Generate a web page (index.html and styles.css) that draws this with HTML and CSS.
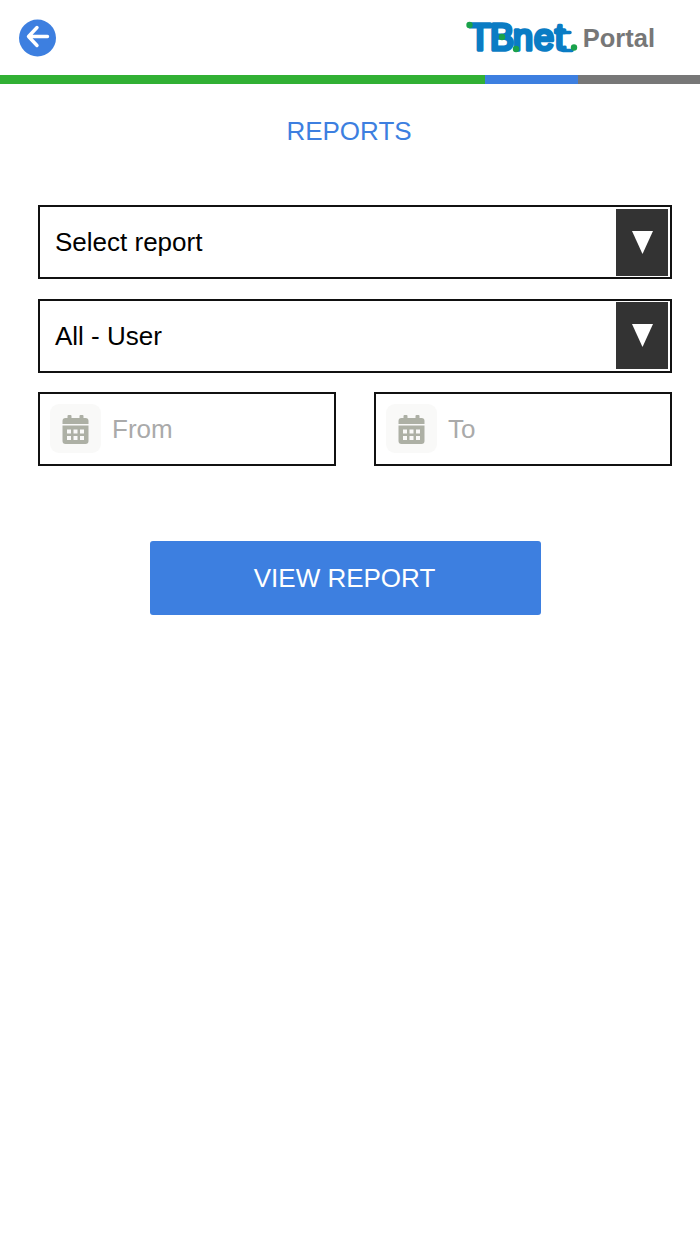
FILE: index.html
```html
<!DOCTYPE html>
<html lang="en">
<head>
<meta charset="utf-8">
<title>Reports</title>
<link rel="stylesheet" href="styles.css">
</head>
<body>
<header class="topbar">
  <svg class="back" width="39" height="38" viewBox="0 0 39 38" aria-label="Back">
    <circle cx="19.500" cy="19" r="18.500" fill="#3d7fe0"/>
    <path d="M10.500 17.500H29.500M19 8.500L10.500 17.500L19 26.500" fill="none" stroke="#fff" stroke-width="3.400" stroke-linecap="round" stroke-linejoin="round"/>
  </svg>
  <div class="brand">
    <svg class="logo" width="114" height="34" viewBox="0 0 114 34" aria-label="TBnet">
      <text class="logo-text" x="3 24 47 68 89" y="29">TBnet</text>
      <path d="M3 5H27M90 11.500H104M97 29.500H106" fill="none" stroke="#0a7cc4" stroke-width="3.500" stroke-linecap="round"/>
      <circle cx="3.500" cy="4" r="3.200" fill="#1aa24a"/>
      <circle cx="36" cy="16" r="3.200" fill="#1aa24a"/>
      <circle cx="50" cy="28" r="3.200" fill="#1aa24a"/>
      <circle cx="108" cy="26.500" r="3.200" fill="#1aa24a"/>
    </svg>
    <span class="portal">Portal</span>
  </div>
</header>
<div class="stripe">
  <span class="stripe-green"></span>
  <span class="stripe-blue"></span>
  <span class="stripe-gray"></span>
</div>
<main class="content">
  <h1 class="title">REPORTS</h1>
  <form class="form">
    <div class="select">
      <span class="select-label">Select report</span>
      <span class="select-arrow"><svg width="21" height="23" viewBox="0 0 21 23"><path d="M0 0H21L10.500 23Z" fill="#fff"/></svg></span>
    </div>
    <div class="select">
      <span class="select-label">All - User</span>
      <span class="select-arrow"><svg width="21" height="23" viewBox="0 0 21 23"><path d="M0 0H21L10.500 23Z" fill="#fff"/></svg></span>
    </div>
    <div class="dates">
      <div class="date">
        <span class="cal-tile">
          <svg width="27" height="29" viewBox="0 0 26 29"><path fill="#adb0a5" fill-rule="evenodd" d="M6 0h2a1 1 0 0 1 1 1V3h8V1a1 1 0 0 1 1-1h2a1 1 0 0 1 1 1V3h2a3 3 0 0 1 3 3v3H0V6a3 3 0 0 1 3-3h2V1a1 1 0 0 1 1-1ZM0 10.500h26V26a3 3 0 0 1-3 3H3a3 3 0 0 1-3-3ZM4.500 14.500v4h4v-4Zm6.500 0v4h4v-4Zm6.500 0v4h4v-4ZM4.500 21v4h4v-4Zm6.500 0v4h4v-4Zm6.500 0v4h4v-4Z"/></svg>
        </span>
        <span class="date-label">From</span>
      </div>
      <div class="date">
        <span class="cal-tile">
          <svg width="27" height="29" viewBox="0 0 26 29"><path fill="#adb0a5" fill-rule="evenodd" d="M6 0h2a1 1 0 0 1 1 1V3h8V1a1 1 0 0 1 1-1h2a1 1 0 0 1 1 1V3h2a3 3 0 0 1 3 3v3H0V6a3 3 0 0 1 3-3h2V1a1 1 0 0 1 1-1ZM0 10.500h26V26a3 3 0 0 1-3 3H3a3 3 0 0 1-3-3ZM4.500 14.500v4h4v-4Zm6.500 0v4h4v-4Zm6.500 0v4h4v-4ZM4.500 21v4h4v-4Zm6.500 0v4h4v-4Zm6.500 0v4h4v-4Z"/></svg>
        </span>
        <span class="date-label">To</span>
      </div>
    </div>
    <button class="view" type="button">VIEW REPORT</button>
  </form>
</main>
</body>
</html>
```
FILE: styles.css
```css
* { box-sizing: border-box; }
html, body { margin: 0; padding: 0; background: #fff; }
body { font-family: "Liberation Sans", Arial, sans-serif; width: 700px; height: 1244px; overflow: hidden; }

.topbar { height: 75px; display: flex; align-items: center; justify-content: space-between; padding: 0 45px 0 18px; }
.back { display: block; }
.brand { display: flex; align-items: center; gap: 3px; }
.logo { display: block; margin-top: 1px; overflow: visible; }
.logo-text { font-family: "Liberation Sans", Arial, sans-serif; font-weight: 400; font-size: 36px; fill: #0a7cc4; stroke: #0a7cc4; stroke-width: 3.500px; stroke-linejoin: round; }
.portal { font-size: 25.500px; font-weight: 700; color: #777; position: relative; top: 1px; }

.stripe { display: flex; height: 9px; }
.stripe-green { width: 485px; background: #31b034; }
.stripe-blue { width: 93px; background: #3d7fe0; }
.stripe-gray { flex: 1; background: #777; }

.content { padding: 0 28px 0 38px; }
.title { margin: 32px 0 59px -38px; width: 698px; text-align: center; font-size: 26px; line-height: 30px; font-weight: 400; color: #3d7fe0; }

.form { display: flex; flex-direction: column; gap: 19.500px; }
.select { height: 74px; border: 2px solid #111; padding: 1.500px 2px; display: flex; align-items: center; justify-content: space-between; }
.select-label { padding: 1.500px 0 0 13px; font-size: 26px; color: #000; }
.select-arrow { width: 52px; height: 67px; background: #333; display: flex; align-items: center; justify-content: center; }
.select-arrow svg { display: block; }

.dates { display: flex; justify-content: space-between; }
.date { width: 298px; height: 74px; border: 2px solid #111; padding-left: 10px; display: flex; align-items: center; gap: 11px; }
.cal-tile { width: 51px; height: 49px; border-radius: 9px; background: #f9f9f8; display: flex; align-items: center; justify-content: center; margin-bottom: 1px; padding-top: 2px; }
.cal-tile svg { display: block; }
.date-label { font-size: 26px; color: #aaa; padding-top: 1px; }

.view { display: block; align-self: flex-start; margin: 55.500px 0 0 112px; width: 391px; height: 74px; border: 0; border-radius: 3px; background: #3d7fe0; color: #fff; font-family: inherit; font-size: 26px; padding: 0 2px 0 0; }
```
